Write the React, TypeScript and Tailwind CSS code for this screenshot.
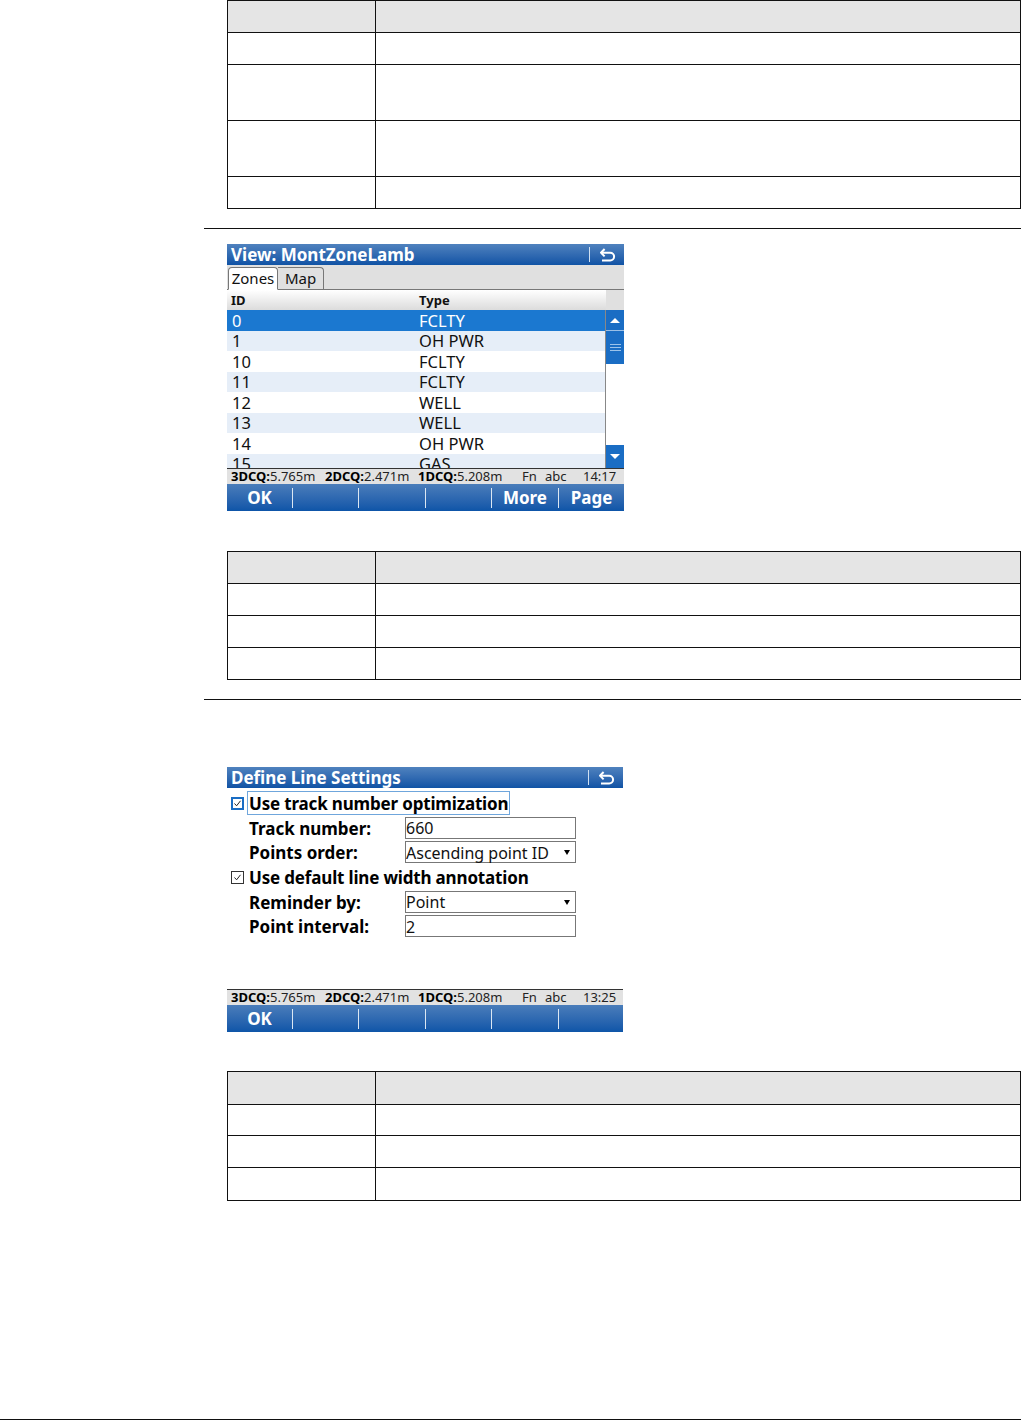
import React from 'react';

const sans = 'font-["Noto_Sans","DejaVu_Sans",sans-serif]';

const BackIcon = () => (
  <svg width="16" height="14" viewBox="0 0 16 14" fill="none" stroke="#fff" strokeWidth="2">
    <path d="M1 4.7h9.2a3.9 3.9 0 0 1 0 7.8H2" />
    <path d="M4.6 1 1 4.7l3.6 3.7" />
  </svg>
);

const Table = ({ rows }: { rows: number[] }) => (
  <div className="ml-[23px] w-[794px] border-t border-l border-[#111]">
    {rows.map((h, i) => (
      <div key={i} className="grid grid-cols-[148px_1fr]" style={{ height: h }}>
        <div className={`border-r border-b border-[#111] ${i === 0 ? 'bg-[#e5e5e5]' : 'bg-white'}`} />
        <div className={`border-r border-b border-[#111] ${i === 0 ? 'bg-[#e5e5e5]' : 'bg-white'}`} />
      </div>
    ))}
  </div>
);

const TitleBar = ({ title, h }: { title: string; h: string }) => (
  <div className={`${h} flex items-center justify-between pl-[4px] pr-[8px] bg-gradient-to-b from-[#4f82be] to-[#0f53a5] text-white`}>
    <span className="text-[17px] font-bold leading-none">{title}</span>
    <div className="flex items-center gap-[10px]">
      <div className="w-px h-[15px] bg-[#cfe0f2]" />
      <BackIcon />
    </div>
  </div>
);

const StatusBar = ({ time }: { time: string }) => (
  <div className="h-[16px] flex items-center bg-[#e2e2e2] border-t border-[#333] pl-[4px] text-[13px] leading-none text-[#222]">
    <span className="w-[94px]"><b className="text-black">3DCQ:</b>5.765m</span>
    <span className="w-[93px]"><b className="text-black">2DCQ:</b>2.471m</span>
    <span className="w-[104px]"><b className="text-black">1DCQ:</b>5.208m</span>
    <span className="w-[23px]">Fn</span>
    <span className="w-[38px]">abc</span>
    <span>{time}</span>
  </div>
);

const SoftKeys = ({ keys }: { keys: string[] }) => (
  <div className="h-[27px] grid grid-cols-[66px_66px_67px_66px_67px_1fr] items-center bg-gradient-to-b from-[#4a7dba] to-[#0d55a8] text-white text-[17px] font-bold">
    {keys.map((k, i) => (
      <div key={i} className={`h-[20px] flex items-center justify-center leading-none ${i < 5 ? 'border-r border-[#dbe7f3]' : ''}`}>
        {k}
      </div>
    ))}
  </div>
);

const zones = [
  ['0', 'FCLTY'],
  ['1', 'OH PWR'],
  ['10', 'FCLTY'],
  ['11', 'FCLTY'],
  ['12', 'WELL'],
  ['13', 'WELL'],
  ['14', 'OH PWR'],
  ['15', 'GAS'],
];

const ViewScreen = () => (
  <div className="ml-[23px] mt-[15px] w-[397px] h-[267px] flex flex-col">
    <TitleBar title="View: MontZoneLamb" h="h-[21px]" />
    <div className="h-[25px] flex items-end bg-[#e0e0e0] border-b border-[#777] pl-px text-[15px] leading-none text-[#111]">
      <div className="h-[23px] w-[50px] -mb-px z-10 flex items-center justify-center bg-white border border-b-white border-[#777] rounded-t-[4px]">Zones</div>
      <div className="h-[22px] w-[46px] flex items-center justify-center border-t border-r border-[#777] rounded-tr-[4px]">Map</div>
    </div>
    <div className="h-[20px] flex">
      <div className="w-[379px] flex items-center bg-gradient-to-b from-white to-[#dcdcdc] pl-[4px] text-[13px] font-bold leading-none text-[#111]">
        <span className="w-[188px]">ID</span>
        <span>Type</span>
      </div>
      <div className="flex-1 bg-[#e0e0e0]" />
    </div>
    <div className="h-[158px] flex overflow-hidden">
      <div className="w-[379px] bg-white border-r border-[#888] overflow-hidden text-[16.5px] leading-none text-[#111]">
        {zones.map(([id, type], i) => (
          <div
            key={id}
            className={`h-[20.5px] flex items-center pl-[5px] pt-px ${i === 0 ? 'bg-[#1b78d0] text-white' : i % 2 === 1 ? 'bg-[#e6eef8]' : 'bg-white'}`}
          >
            <span className="w-[187px]">{id}</span>
            <span>{type}</span>
          </div>
        ))}
      </div>
      <div className="flex-1 flex flex-col bg-white">
        <div className="h-[21px] flex items-center justify-center bg-[#1a6dc4] border-b border-[#9bbfe6]">
          <div className="border-x-[5px] border-x-transparent border-b-[5px] border-b-white" />
        </div>
        <div className="h-[33px] flex flex-col items-center justify-center gap-[2px] bg-[#1a6dc4]">
          <div className="w-[11px] h-px bg-[#9cc3ea]" />
          <div className="w-[11px] h-px bg-[#9cc3ea]" />
          <div className="w-[11px] h-px bg-[#9cc3ea]" />
        </div>
        <div className="flex-1" />
        <div className="h-[23px] flex items-center justify-center bg-[#1a6dc4]">
          <div className="border-x-[5px] border-x-transparent border-t-[5px] border-t-white" />
        </div>
      </div>
    </div>
    <StatusBar time="14:17" />
    <SoftKeys keys={['OK', '', '', '', 'More', 'Page']} />
  </div>
);

const Check = ({ focus }: { focus?: boolean }) => (
  <div className={`w-[13px] h-[13px] flex items-center justify-center bg-white ${focus ? 'border-2 border-[#1a6dc4]' : 'border border-[#333]'}`}>
    <svg width="9" height="9" viewBox="0 0 9 9" fill="none" stroke="#222" strokeWidth="1" className="shrink-0">
      <path d="M1.5 4.5 3.6 6.8 7.5 1.8" />
    </svg>
  </div>
);

const CheckRow = ({ label, focus }: { label: string; focus?: boolean }) => (
  <div className="h-[24.6px] flex items-center pl-[4px] gap-[3px]">
    <Check focus={focus} />
    <span className={`text-[17px] tracking-[-0.17px] font-bold leading-none px-px pt-[3px] pb-[2px] border ${focus ? 'border-[#6fa6dc]' : 'border-transparent'}`}>{label}</span>
  </div>
);

const FieldRow = ({ label, value, select }: { label: string; value: string; select?: boolean }) => (
  <div className="h-[24.6px] flex items-center pl-[22px]">
    <span className="w-[156px] pt-px text-[17px] font-bold leading-none">{label}</span>
    <div className="w-[171px] h-[22px] flex items-center justify-between border border-[#777] bg-white pl-0 pr-[5px] pt-px text-[16px] leading-none text-[#111]">
      <span>{value}</span>
      {select && <div className="border-x-[3px] border-x-transparent border-t-[5px] border-t-black" />}
    </div>
  </div>
);

const SettingsScreen = () => (
  <div className="ml-[23px] mt-[67px] w-[396px] h-[265px] flex flex-col">
    <TitleBar title="Define Line Settings" h="h-[21px]" />
    <div className="h-[201px] bg-white pt-[3px] text-black">
      <CheckRow label="Use track number optimization" focus />
      <FieldRow label="Track number:" value="660" />
      <FieldRow label="Points order:" value="Ascending point ID" select />
      <CheckRow label="Use default line width annotation" />
      <FieldRow label="Reminder by:" value="Point" select />
      <FieldRow label="Point interval:" value="2" />
    </div>
    <StatusBar time="13:25" />
    <SoftKeys keys={['OK', '', '', '', '', '']} />
  </div>
);

export default function App() {
  return (
    <div className={`${sans} relative w-[1021px] h-[1420px] bg-white pl-[204px]`}>
      <Table rows={[32, 32, 56, 56, 32]} />
      <div className="mt-[19px] h-px bg-[#111]" />
      <ViewScreen />
      <div className="mt-[40px]">
        <Table rows={[32, 32, 32, 32]} />
      </div>
      <div className="mt-[19px] h-px bg-[#111]" />
      <SettingsScreen />
      <div className="mt-[39px]">
        <Table rows={[33, 31, 32, 33]} />
      </div>
      <div className="absolute left-0 right-0 bottom-0 h-px bg-[#111]" />
    </div>
  );
}
